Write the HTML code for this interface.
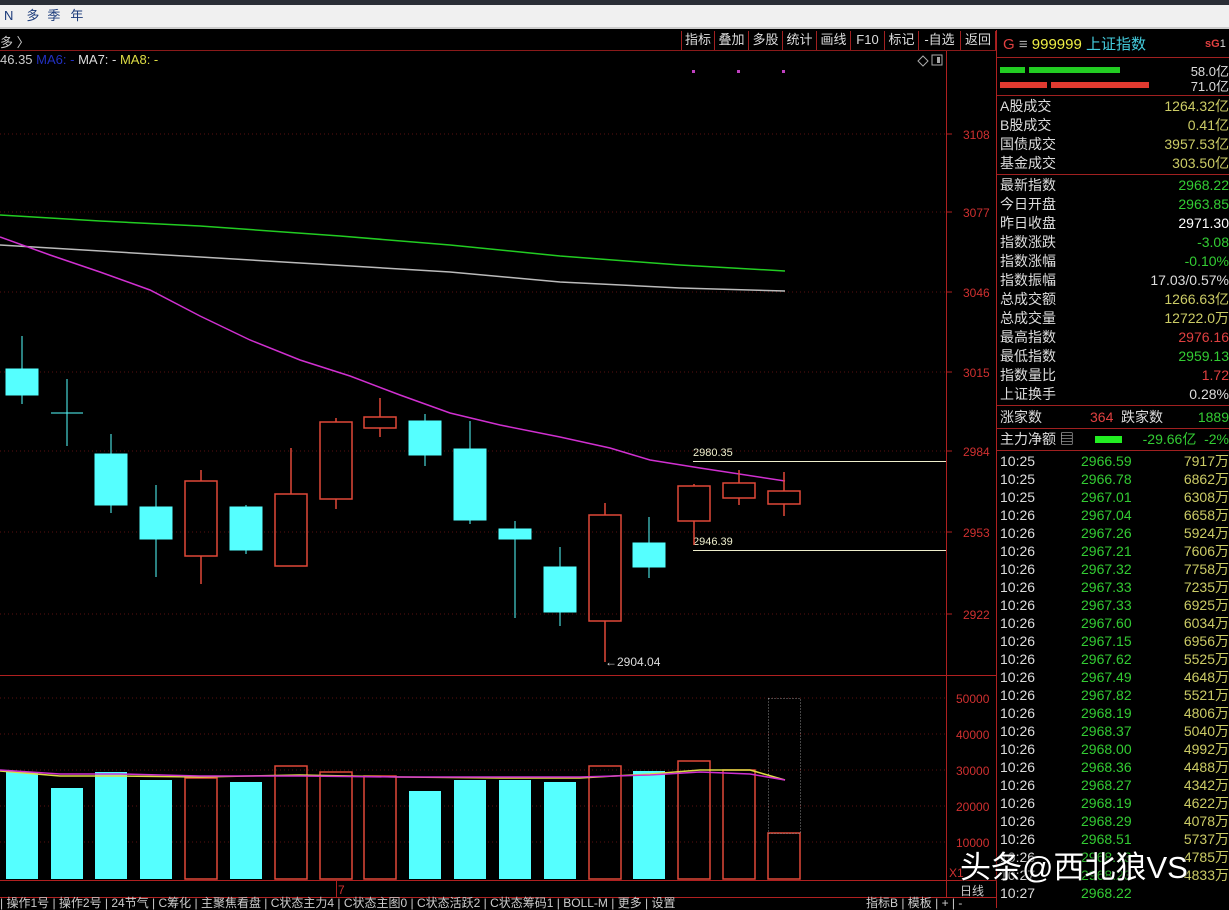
<!DOCTYPE html>
<html><head><meta charset="utf-8"><style>
*{margin:0;padding:0;box-sizing:border-box}
body{width:1229px;height:908px;background:#000;overflow:hidden;position:relative;font-family:"Liberation Sans","Noto Sans CJK SC",sans-serif;color:#ccc}
.a{position:absolute;white-space:nowrap}
.top{left:0;top:0;width:1229px;height:5px;background:#2a2e36}
.bar{left:0;top:5px;width:1229px;height:24px;background:#f0f0f0;border-bottom:2px solid #ccc;font-size:13px;color:#1a3a7a;line-height:22px}
.tb{top:31px;height:19px;font-size:13px;color:#ddd;line-height:18px;border-right:1px solid #a02020;text-align:center}
.rp{font-size:13px}
.row{position:absolute;left:1000px;width:229px;height:18px;font-size:14px;line-height:18px}
.row .t{position:absolute;left:0;color:#ddd}
.row .p{position:absolute;left:81px;color:#3c3}
.row .v{position:absolute;right:0;color:#cc6}
.kv{position:absolute;left:1000px;width:229px;height:19px;font-size:14px;line-height:19px;color:#ddd}
.kv span{position:absolute;right:0}
</style></head><body>
<div class="a top"></div>
<div class="a bar"><span style="margin-left:4px">N</span><span style="margin-left:13px">多</span><span style="margin-left:8px">季</span><span style="margin-left:10px">年</span></div>
<div class="a" style="left:0;top:30px;width:997px;height:21px;border-bottom:1px solid #8a1a1a"></div>
<div class="a" style="left:0;top:32px;font-size:13px;color:#ccc">多 〉</div>
<div class="a tb" style="left:681px;width:34px;border-left:1px solid #a02020">指标</div>
<div class="a tb" style="left:715px;width:34px">叠加</div>
<div class="a tb" style="left:749px;width:34px">多股</div>
<div class="a tb" style="left:783px;width:34px">统计</div>
<div class="a tb" style="left:817px;width:34px">画线</div>
<div class="a tb" style="left:851px;width:34px">F10</div>
<div class="a tb" style="left:885px;width:34px">标记</div>
<div class="a tb" style="left:919px;width:42px">-自选</div>
<div class="a tb" style="left:961px;width:35px">返回</div>
<div class="a" style="left:0;top:52px;font-size:13px"><span style="color:#ccc">46.35 </span><span style="color:#2230c0">MA6: -</span><span style="color:#ddd"> MA7: - </span><span style="color:#dd4">MA8: -</span></div>

<svg class="a" style="left:0;top:0" width="997" height="908">
<g stroke="#5a1010" stroke-dasharray="1,3">
<line x1="0" y1="134" x2="946" y2="134"/><line x1="0" y1="212" x2="946" y2="212"/><line x1="0" y1="292" x2="946" y2="292"/><line x1="0" y1="372" x2="946" y2="372"/><line x1="0" y1="451" x2="946" y2="451"/><line x1="0" y1="532" x2="946" y2="532"/><line x1="0" y1="614" x2="946" y2="614"/>
<line x1="0" y1="698" x2="946" y2="698"/><line x1="0" y1="734" x2="946" y2="734"/><line x1="0" y1="770" x2="946" y2="770"/><line x1="0" y1="806" x2="946" y2="806"/><line x1="0" y1="842" x2="946" y2="842"/>
</g>
<g stroke="#b02020"><line x1="946.5" y1="51" x2="946.5" y2="897"/><line x1="996.5" y1="30" x2="996.5" y2="908"/><line x1="0" y1="675.5" x2="997" y2="675.5"/><line x1="0" y1="880.5" x2="997" y2="880.5"/><line x1="0" y1="897.5" x2="997" y2="897.5"/><line x1="336.5" y1="880" x2="336.5" y2="897"/></g>
<g fill="#d03030" font-size="12" font-family="Liberation Sans">
<text x="963" y="139">3108</text><text x="963" y="217">3077</text><text x="963" y="297">3046</text><text x="963" y="377">3015</text><text x="963" y="456">2984</text><text x="963" y="537">2953</text><text x="963" y="619">2922</text>
<text x="956" y="703">50000</text><text x="956" y="739">40000</text><text x="956" y="775">30000</text><text x="956" y="811">20000</text><text x="956" y="847">10000</text><text x="949" y="877">X1</text>
<text x="338" y="894">7</text></g>
<g stroke="#b02020"><line x1="946" y1="134" x2="952" y2="134"/><line x1="946" y1="212" x2="952" y2="212"/><line x1="946" y1="292" x2="952" y2="292"/><line x1="946" y1="372" x2="952" y2="372"/><line x1="946" y1="451" x2="952" y2="451"/><line x1="946" y1="532" x2="952" y2="532"/><line x1="946" y1="614" x2="952" y2="614"/></g>
<text x="960" y="895" fill="#ccc" font-size="12" font-family="Noto Sans CJK SC">日线</text>
<g fill="#c040c0"><rect x="692" y="70" width="3" height="3"/><rect x="737" y="70" width="3" height="3"/><rect x="782" y="70" width="3" height="3"/></g>
<path d="M918 61l5-5 5 5-5 5z" fill="none" stroke="#aaa"/><rect x="932" y="55" width="10" height="10" fill="none" stroke="#aaa"/><rect x="937" y="57" width="3" height="6" fill="#aaa"/>
<!-- MA lines -->
<polyline fill="none" stroke="#22cc22" stroke-width="1.5" points="0,215 100,221 200,226 340,236 450,245 560,256 680,265 785,271"/>
<polyline fill="none" stroke="#bbb" stroke-width="1.5" points="0,245 150,254 300,263 450,272 560,282 680,288 785,291"/>
<polyline fill="none" stroke="#d030d0" stroke-width="1.5" points="0,237 50,255 100,272 150,290 200,316 250,340 300,360 350,376 400,395 450,413 500,425 560,437 610,448 650,460 700,468 785,481"/>
<!-- marks -->
<line x1="693" y1="461.5" x2="946" y2="461.5" stroke="#eec"/><line x1="693" y1="550.5" x2="946" y2="550.5" stroke="#eec"/>
<g fill="#eec" font-size="11" font-family="Liberation Sans"><text x="693" y="456">2980.35</text><text x="693" y="545">2946.39</text></g>
<text x="605" y="666" fill="#ddd" font-size="12" font-family="Liberation Sans">←2904.04</text>
<!-- candles -->
<g stroke="#5ff" fill="#5ff">
<line x1="22" y1="336" x2="22" y2="404"/><rect x="6" y="369" width="32" height="26"/>
<line x1="67" y1="379" x2="67" y2="446"/><line x1="51" y1="413" x2="83" y2="413"/>
<line x1="111" y1="434" x2="111" y2="513"/><rect x="95" y="454" width="32" height="51"/>
<line x1="156" y1="485" x2="156" y2="577"/><rect x="140" y="507" width="32" height="32"/>
<line x1="246" y1="505" x2="246" y2="554"/><rect x="230" y="507" width="32" height="43"/>
<line x1="425" y1="414" x2="425" y2="466"/><rect x="409" y="421" width="32" height="34"/>
<line x1="470" y1="421" x2="470" y2="524"/><rect x="454" y="449" width="32" height="71"/>
<line x1="515" y1="521" x2="515" y2="618"/><rect x="499" y="529" width="32" height="10"/>
<line x1="560" y1="547" x2="560" y2="626"/><rect x="544" y="567" width="32" height="45"/>
<line x1="649" y1="517" x2="649" y2="578"/><rect x="633" y="543" width="32" height="24"/>
</g>
<g stroke="#e04838" fill="none" stroke-width="1.5">
<line x1="201" y1="470" x2="201" y2="481"/><line x1="201" y1="556" x2="201" y2="584"/><rect x="185" y="481" width="32" height="75"/>
<line x1="291" y1="448" x2="291" y2="494"/><rect x="275" y="494" width="32" height="72"/>
<line x1="336" y1="418" x2="336" y2="422"/><line x1="336" y1="499" x2="336" y2="509"/><rect x="320" y="422" width="32" height="77"/>
<line x1="380" y1="398" x2="380" y2="417"/><line x1="380" y1="428" x2="380" y2="437"/><rect x="364" y="417" width="32" height="11"/>
<line x1="605" y1="503" x2="605" y2="515"/><line x1="605" y1="621" x2="605" y2="662"/><rect x="589" y="515" width="32" height="106"/>
<line x1="694" y1="484" x2="694" y2="486"/><line x1="694" y1="521" x2="694" y2="545"/><rect x="678" y="486" width="32" height="35"/>
<line x1="739" y1="470" x2="739" y2="483"/><line x1="739" y1="498" x2="739" y2="505"/><rect x="723" y="483" width="32" height="15"/>
<line x1="784" y1="472" x2="784" y2="491"/><line x1="784" y1="504" x2="784" y2="516"/><rect x="768" y="491" width="32" height="13"/>
</g>
<!-- volume -->
<g fill="#5ff">
<rect x="6" y="772" width="32" height="107"/><rect x="51" y="788" width="32" height="91"/><rect x="95" y="772" width="32" height="107"/><rect x="140" y="780" width="32" height="99"/><rect x="230" y="782" width="32" height="97"/><rect x="409" y="791" width="32" height="88"/><rect x="454" y="780" width="32" height="99"/><rect x="499" y="780" width="32" height="99"/><rect x="544" y="782" width="32" height="97"/><rect x="633" y="771" width="32" height="108"/>
</g>
<g stroke="#e04838" fill="none" stroke-width="1.5">
<rect x="185" y="778" width="32" height="101"/><rect x="275" y="766" width="32" height="113"/><rect x="320" y="772" width="32" height="107"/><rect x="364" y="776" width="32" height="103"/><rect x="589" y="766" width="32" height="113"/><rect x="678" y="761" width="32" height="118"/><rect x="723" y="770" width="32" height="109"/><rect x="768" y="833" width="32" height="46"/>
</g>
<rect x="768.5" y="698.5" width="32" height="135" fill="none" stroke="#888" stroke-dasharray="1,2"/>
<polyline fill="none" stroke="#dd4" stroke-width="1.5" points="0,771 60,776 120,776 200,777 300,775 400,777 500,778 580,778 650,774 700,770 750,770 785,780"/>
<polyline fill="none" stroke="#d030d0" stroke-width="1.5" points="0,770 60,774 120,774 200,776 300,776 400,777 500,777 580,777 650,775 700,772 750,774 785,780"/>
</svg>

<div class="a" style="left:0;top:898px;font-size:12px;color:#ccc;line-height:10px">| 操作1号 | 操作2号 | 24节气 | C筹化 | 主聚焦看盘 | C状态主力4 | C状态主图0 | C状态活跃2 | C状态筹码1 | BOLL-M | 更多 | 设置</div>
<div class="a" style="left:866px;top:898px;font-size:12px;color:#ccc;line-height:10px">指标B | 模板 | + | -</div>

<!-- right panel -->
<div class="a" style="left:1003px;top:33px;font-size:15px"><span style="color:#e04040">G</span><span style="color:#aaa"> ≡ </span><span style="color:#ee4">999999 </span><span style="color:#4cd">上证指数</span></div>
<div class="a" style="left:1205px;top:38px;font-size:11px;color:#e04040;font-weight:bold">sG<span style="color:#ddd;font-weight:normal">1</span></div>
<div class="a" style="left:997px;top:57px;width:232px;border-top:1px solid #a02020"></div>
<div class="a" style="left:1000px;top:67px;width:25px;height:6px;background:#2c2"></div>
<div class="a" style="left:1029px;top:67px;width:91px;height:6px;background:#2c2"></div>
<div class="a" style="left:1000px;top:82px;width:47px;height:6px;background:#e03a30"></div>
<div class="a" style="left:1051px;top:82px;width:98px;height:6px;background:#e03a30"></div>
<div class="a" style="right:0;top:61px;font-size:13px;color:#ddd">58.0亿</div>
<div class="a" style="right:0;top:76px;font-size:13px;color:#ddd">71.0亿</div>
<div class="a" style="left:997px;top:95px;width:232px;border-top:1px solid #a02020"></div>
<div class="kv" style="top:97px">A股成交<span style="color:#cc6">1264.32亿</span></div>
<div class="kv" style="top:116px">B股成交<span style="color:#cc6">0.41亿</span></div>
<div class="kv" style="top:135px">国债成交<span style="color:#cc6">3957.53亿</span></div>
<div class="kv" style="top:154px">基金成交<span style="color:#cc6">303.50亿</span></div>
<div class="a" style="left:997px;top:174px;width:232px;border-top:1px solid #a02020"></div>
<div class="kv" style="top:176px">最新指数<span style="color:#3c3">2968.22</span></div>
<div class="kv" style="top:195px">今日开盘<span style="color:#3c3">2963.85</span></div>
<div class="kv" style="top:214px">昨日收盘<span style="color:#fff">2971.30</span></div>
<div class="kv" style="top:233px">指数涨跌<span style="color:#3c3">-3.08</span></div>
<div class="kv" style="top:252px">指数涨幅<span style="color:#3c3">-0.10%</span></div>
<div class="kv" style="top:271px">指数振幅<span style="color:#ddd">17.03/0.57%</span></div>
<div class="kv" style="top:290px">总成交额<span style="color:#cc6">1266.63亿</span></div>
<div class="kv" style="top:309px">总成交量<span style="color:#cc6">12722.0万</span></div>
<div class="kv" style="top:328px">最高指数<span style="color:#e04040">2976.16</span></div>
<div class="kv" style="top:347px">最低指数<span style="color:#3c3">2959.13</span></div>
<div class="kv" style="top:366px">指数量比<span style="color:#e04040">1.72</span></div>
<div class="kv" style="top:385px">上证换手<span style="color:#ddd">0.28%</span></div>
<div class="a" style="left:997px;top:405px;width:232px;border-top:1px solid #a02020"></div>
<div class="kv" style="top:408px">涨家数<b style="position:absolute;left:90px;color:#e04040;font-weight:normal">364</b><b style="position:absolute;left:121px;font-weight:normal">跌家数</b><span style="color:#3c3">1889</span></div>
<div class="a" style="left:997px;top:428px;width:232px;border-top:1px solid #a02020"></div>
<div class="kv" style="top:430px">主力净额 ▤<b style="position:absolute;left:95px;top:6px;width:27px;height:7px;background:#2e2"></b><span style="color:#3c3">-29.66亿&nbsp; -2%</span></div>
<div class="a" style="left:997px;top:450px;width:232px;border-top:1px solid #a02020"></div>
<div class="row" style="top:452px"><span class="t">10:25</span><span class="p">2966.59</span><span class="v">7917万</span></div>
<div class="row" style="top:470px"><span class="t">10:25</span><span class="p">2966.78</span><span class="v">6862万</span></div>
<div class="row" style="top:488px"><span class="t">10:25</span><span class="p">2967.01</span><span class="v">6308万</span></div>
<div class="row" style="top:506px"><span class="t">10:26</span><span class="p">2967.04</span><span class="v">6658万</span></div>
<div class="row" style="top:524px"><span class="t">10:26</span><span class="p">2967.26</span><span class="v">5924万</span></div>
<div class="row" style="top:542px"><span class="t">10:26</span><span class="p">2967.21</span><span class="v">7606万</span></div>
<div class="row" style="top:560px"><span class="t">10:26</span><span class="p">2967.32</span><span class="v">7758万</span></div>
<div class="row" style="top:578px"><span class="t">10:26</span><span class="p">2967.33</span><span class="v">7235万</span></div>
<div class="row" style="top:596px"><span class="t">10:26</span><span class="p">2967.33</span><span class="v">6925万</span></div>
<div class="row" style="top:614px"><span class="t">10:26</span><span class="p">2967.60</span><span class="v">6034万</span></div>
<div class="row" style="top:632px"><span class="t">10:26</span><span class="p">2967.15</span><span class="v">6956万</span></div>
<div class="row" style="top:650px"><span class="t">10:26</span><span class="p">2967.62</span><span class="v">5525万</span></div>
<div class="row" style="top:668px"><span class="t">10:26</span><span class="p">2967.49</span><span class="v">4648万</span></div>
<div class="row" style="top:686px"><span class="t">10:26</span><span class="p">2967.82</span><span class="v">5521万</span></div>
<div class="row" style="top:704px"><span class="t">10:26</span><span class="p">2968.19</span><span class="v">4806万</span></div>
<div class="row" style="top:722px"><span class="t">10:26</span><span class="p">2968.37</span><span class="v">5040万</span></div>
<div class="row" style="top:740px"><span class="t">10:26</span><span class="p">2968.00</span><span class="v">4992万</span></div>
<div class="row" style="top:758px"><span class="t">10:26</span><span class="p">2968.36</span><span class="v">4488万</span></div>
<div class="row" style="top:776px"><span class="t">10:26</span><span class="p">2968.27</span><span class="v">4342万</span></div>
<div class="row" style="top:794px"><span class="t">10:26</span><span class="p">2968.19</span><span class="v">4622万</span></div>
<div class="row" style="top:812px"><span class="t">10:26</span><span class="p">2968.29</span><span class="v">4078万</span></div>
<div class="row" style="top:830px"><span class="t">10:26</span><span class="p">2968.51</span><span class="v">5737万</span></div>
<div class="row" style="top:848px"><span class="t">10:26</span><span class="p">2968.13</span><span class="v">4785万</span></div>
<div class="row" style="top:866px"><span class="t">10:27</span><span class="p">2968.23</span><span class="v">4833万</span></div>
<div class="row" style="top:884px"><span class="t">10:27</span><span class="p">2968.22</span><span class="v"></span></div>
<div class="a" style="left:960px;top:842px;font-size:31px;color:#fff;font-family:'Liberation Sans','Noto Sans CJK SC',sans-serif;text-shadow:0 0 3px #000,0 0 2px #000">头条@西北狼VS</div>
</body></html>
